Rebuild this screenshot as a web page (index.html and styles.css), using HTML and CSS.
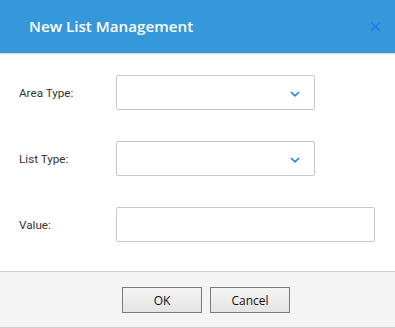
FILE: index.html
```html
<!DOCTYPE html>
<html>
<head>
<meta charset="utf-8">
<link rel="stylesheet" href="styles.css">
</head>
<body>
<div class="dialog">
  <div class="header">
    <span class="title">New List Management</span>
    <span class="close"><svg width="11" height="11" viewBox="0 0 11 11"><path d="M1 1L10 10M10 1L1 10" stroke="#1a80e6" stroke-width="1.6" fill="none"/></svg></span>
  </div>
  <div class="body">
    <div class="row">
      <label class="label">Area Type:</label>
      <div class="field select"><svg class="chev" width="10" height="6" viewBox="0 0 10 6"><path d="M1 1L5 4.8L9 1" stroke="#1a86f0" stroke-width="1.7" fill="none"/></svg></div>
    </div>
    <div class="row">
      <label class="label">List Type:</label>
      <div class="field select"><svg class="chev" width="10" height="6" viewBox="0 0 10 6"><path d="M1 1L5 4.8L9 1" stroke="#1a86f0" stroke-width="1.7" fill="none"/></svg></div>
    </div>
    <div class="row">
      <label class="label">Value:</label>
      <div class="field text"></div>
    </div>
  </div>
  <div class="footer">
    <button class="btn">OK</button>
    <button class="btn">Cancel</button>
  </div>
</div>
</body>
</html>
```
FILE: styles.css
```css
html, body { margin: 0; padding: 0; background: #fff; }
.dialog { width: 395px; height: 328px; display: flex; flex-direction: column; }
.header {
  height: 53px; background: #3598db; border-bottom: 1px solid #d6d6d6;
  display: flex; align-items: center; justify-content: space-between;
  padding: 0 14px 0 29px; box-sizing: content-box;
}
.title { color: #fff; font-family: "Open Sans", sans-serif; font-weight: 600; font-size: 15.2px; margin-top: -1px; }
.close { display: flex; margin-top: -1px; }
.body { padding: 21px 0 29px 0; display: flex; flex-direction: column; gap: 31px; flex: 1; }
.row { display: flex; align-items: center; }
.label { width: 97px; padding-left: 19px; font-family: Roboto, sans-serif; font-size: 11.7px; color: #333; }
.field { height: 33px; border: 1px solid #c8c8c8; border-radius: 2px; background: #fff; display: flex; align-items: center; justify-content: flex-end; box-sizing: content-box; }
.select { width: 197px; }
.text { width: 257px; }
.chev { margin-right: 14px; margin-top: 2px; }
.footer {
  height: 55px; background: #f4f4f4; border-top: 1px solid #cfcfcf; border-bottom: 1px solid #cfcfcf;
  display: flex; align-items: center; justify-content: center; gap: 8px; padding-left: 17px;
}
.btn {
  width: 80px; height: 26px; border: 1px solid #7a7a7a; border-radius: 0;
  background: linear-gradient(#f4f4f4, #e4e4e4);
  font-family: "Open Sans", sans-serif; font-size: 12px; color: #111; padding: 0; margin-top: 1px;
}
```
